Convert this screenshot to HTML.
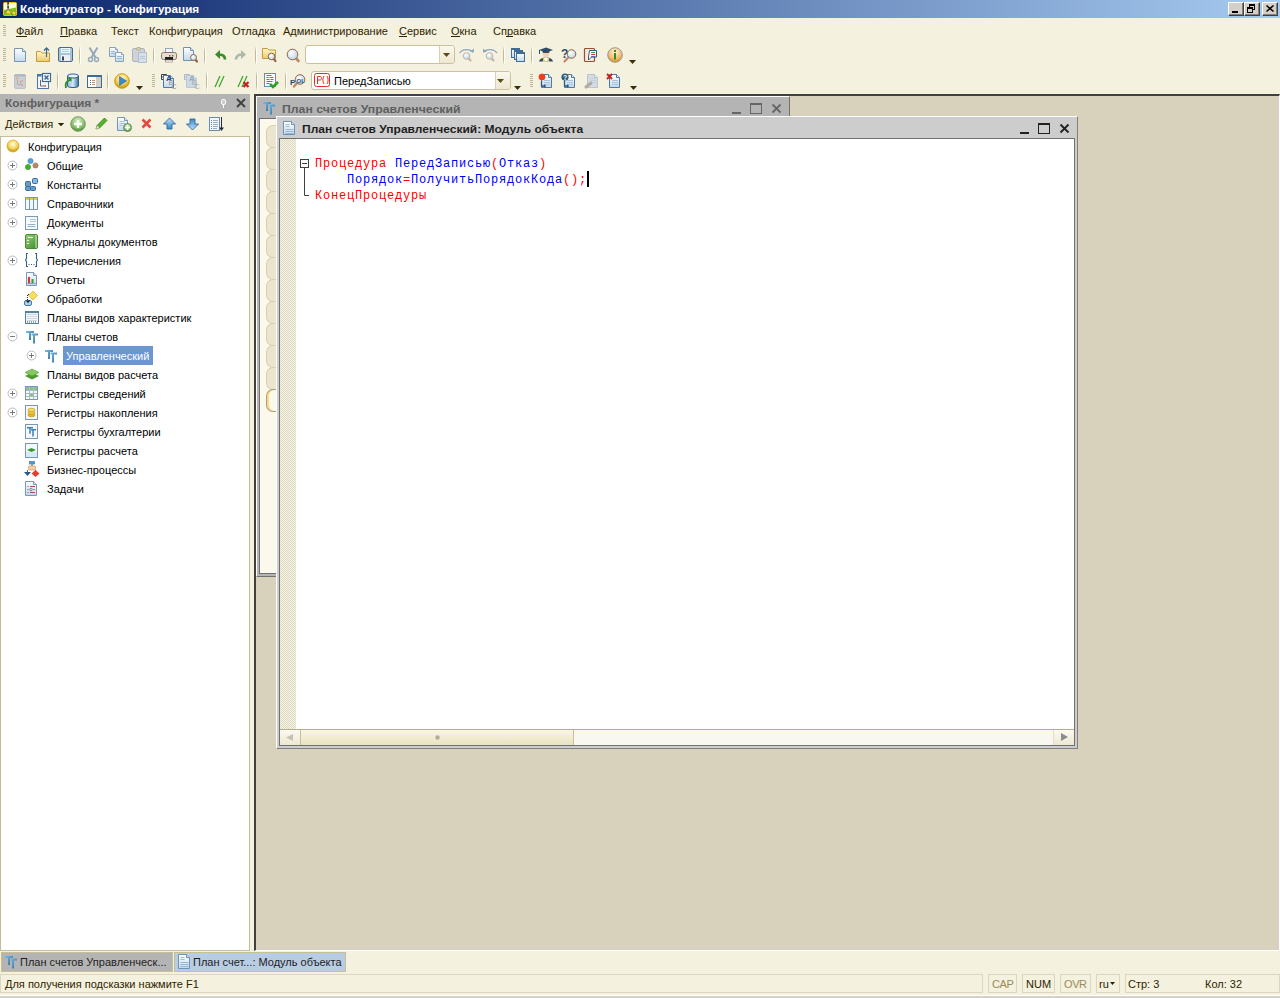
<!DOCTYPE html>
<html><head><meta charset="utf-8"><title>Конфигуратор - Конфигурация</title><style>
*{margin:0;padding:0;box-sizing:border-box}
html,body{width:1280px;height:998px;overflow:hidden}
body{position:relative;background:#F4F1DE;font:11px "Liberation Sans",sans-serif;color:#2E2400}
.a{position:absolute}
.t{position:absolute;white-space:pre}
</style></head><body>
<div class="a" style="left:0px;top:0px;width:1280px;height:18px;background:linear-gradient(to right,#0A246A,#A6CAF0);"></div>
<div class="t" style="left:20px;top:3px;color:#FFFFFF;font-size:11px;font-weight:bold;font-family:'Liberation Sans';line-height:13px;transform:scaleX(1.066);transform-origin:0 0;">Конфигуратор - Конфигурация</div>
<div class="a" style="left:1228px;top:2px;width:16px;height:14px;background:#D4D0C8;border-top:1px solid #fff;border-left:1px solid #fff;border-right:1px solid #404040;border-bottom:1px solid #404040;box-shadow:inset -1px -1px 0 #808080"></div>
<div class="a" style="left:1244px;top:2px;width:16px;height:14px;background:#D4D0C8;border-top:1px solid #fff;border-left:1px solid #fff;border-right:1px solid #404040;border-bottom:1px solid #404040;box-shadow:inset -1px -1px 0 #808080"></div>
<div class="a" style="left:1262px;top:2px;width:16px;height:14px;background:#D4D0C8;border-top:1px solid #fff;border-left:1px solid #fff;border-right:1px solid #404040;border-bottom:1px solid #404040;box-shadow:inset -1px -1px 0 #808080"></div>
<div class="a" style="left:1232px;top:11px;width:6px;height:2px;background:#000;"></div>
<svg class="a" style="left:1244px;top:2px;" width="16" height="14" viewBox="0 0 16 14"><g fill="#000" shape-rendering="crispEdges"><rect x="5" y="2" width="6" height="2"/><rect x="10" y="2" width="1" height="6"/><rect x="9" y="7" width="2" height="1"/><rect x="5" y="2" width="1" height="3"/><rect x="3" y="5" width="6" height="2"/><rect x="3" y="5" width="1" height="6"/><rect x="8" y="5" width="1" height="6"/><rect x="3" y="10" width="6" height="1"/></g></svg>
<svg class="a" style="left:1262px;top:2px;" width="16" height="14" viewBox="0 0 16 14"><path d="M4.5 3.5l7 6M11.5 3.5l-7 6" stroke="#000" stroke-width="1.6" fill="none"/></svg>
<div class="a" style="left:254px;top:94px;width:1026px;height:857px;background:#D8D2BC;border-top:2px solid #404040;border-left:2px solid #404040;border-right:1px solid #fff;border-bottom:1px solid #fff;box-shadow:inset -1px -1px 0 #D4D0C8"></div>
<div class="a" style="left:3px;top:25px;width:3px;height:1px;background:#BEB592;"></div>
<div class="a" style="left:3px;top:27px;width:3px;height:1px;background:#BEB592;"></div>
<div class="a" style="left:3px;top:29px;width:3px;height:1px;background:#BEB592;"></div>
<div class="a" style="left:3px;top:31px;width:3px;height:1px;background:#BEB592;"></div>
<div class="a" style="left:3px;top:33px;width:3px;height:1px;background:#BEB592;"></div>
<div class="a" style="left:3px;top:35px;width:3px;height:1px;background:#BEB592;"></div>
<div class="a" style="left:3px;top:48px;width:3px;height:1px;background:#BEB592;"></div>
<div class="a" style="left:3px;top:50px;width:3px;height:1px;background:#BEB592;"></div>
<div class="a" style="left:3px;top:52px;width:3px;height:1px;background:#BEB592;"></div>
<div class="a" style="left:3px;top:54px;width:3px;height:1px;background:#BEB592;"></div>
<div class="a" style="left:3px;top:56px;width:3px;height:1px;background:#BEB592;"></div>
<div class="a" style="left:3px;top:58px;width:3px;height:1px;background:#BEB592;"></div>
<div class="a" style="left:3px;top:60px;width:3px;height:1px;background:#BEB592;"></div>
<div class="a" style="left:3px;top:74px;width:3px;height:1px;background:#BEB592;"></div>
<div class="a" style="left:3px;top:76px;width:3px;height:1px;background:#BEB592;"></div>
<div class="a" style="left:3px;top:78px;width:3px;height:1px;background:#BEB592;"></div>
<div class="a" style="left:3px;top:80px;width:3px;height:1px;background:#BEB592;"></div>
<div class="a" style="left:3px;top:82px;width:3px;height:1px;background:#BEB592;"></div>
<div class="a" style="left:3px;top:84px;width:3px;height:1px;background:#BEB592;"></div>
<div class="a" style="left:3px;top:86px;width:3px;height:1px;background:#BEB592;"></div>
<div class="a" style="left:152px;top:74px;width:3px;height:1px;background:#BEB592;"></div>
<div class="a" style="left:152px;top:76px;width:3px;height:1px;background:#BEB592;"></div>
<div class="a" style="left:152px;top:78px;width:3px;height:1px;background:#BEB592;"></div>
<div class="a" style="left:152px;top:80px;width:3px;height:1px;background:#BEB592;"></div>
<div class="a" style="left:152px;top:82px;width:3px;height:1px;background:#BEB592;"></div>
<div class="a" style="left:152px;top:84px;width:3px;height:1px;background:#BEB592;"></div>
<div class="a" style="left:152px;top:86px;width:3px;height:1px;background:#BEB592;"></div>
<div class="a" style="left:530px;top:74px;width:3px;height:1px;background:#BEB592;"></div>
<div class="a" style="left:530px;top:76px;width:3px;height:1px;background:#BEB592;"></div>
<div class="a" style="left:530px;top:78px;width:3px;height:1px;background:#BEB592;"></div>
<div class="a" style="left:530px;top:80px;width:3px;height:1px;background:#BEB592;"></div>
<div class="a" style="left:530px;top:82px;width:3px;height:1px;background:#BEB592;"></div>
<div class="a" style="left:530px;top:84px;width:3px;height:1px;background:#BEB592;"></div>
<div class="a" style="left:530px;top:86px;width:3px;height:1px;background:#BEB592;"></div>
<div class="a" style="left:79px;top:47px;width:1px;height:17px;background:linear-gradient(rgba(190,178,130,0.2),#C4BA90 25%,#C4BA90 75%,rgba(190,178,130,0.2));box-shadow:1px 0 0 #FFFFFF"></div>
<div class="a" style="left:153px;top:47px;width:1px;height:17px;background:linear-gradient(rgba(190,178,130,0.2),#C4BA90 25%,#C4BA90 75%,rgba(190,178,130,0.2));box-shadow:1px 0 0 #FFFFFF"></div>
<div class="a" style="left:204px;top:47px;width:1px;height:17px;background:linear-gradient(rgba(190,178,130,0.2),#C4BA90 25%,#C4BA90 75%,rgba(190,178,130,0.2));box-shadow:1px 0 0 #FFFFFF"></div>
<div class="a" style="left:255px;top:47px;width:1px;height:17px;background:linear-gradient(rgba(190,178,130,0.2),#C4BA90 25%,#C4BA90 75%,rgba(190,178,130,0.2));box-shadow:1px 0 0 #FFFFFF"></div>
<div class="a" style="left:503px;top:47px;width:1px;height:17px;background:linear-gradient(rgba(190,178,130,0.2),#C4BA90 25%,#C4BA90 75%,rgba(190,178,130,0.2));box-shadow:1px 0 0 #FFFFFF"></div>
<div class="a" style="left:531px;top:47px;width:1px;height:17px;background:linear-gradient(rgba(190,178,130,0.2),#C4BA90 25%,#C4BA90 75%,rgba(190,178,130,0.2));box-shadow:1px 0 0 #FFFFFF"></div>
<div class="a" style="left:57px;top:72px;width:1px;height:18px;background:linear-gradient(rgba(190,178,130,0.2),#C4BA90 25%,#C4BA90 75%,rgba(190,178,130,0.2));box-shadow:1px 0 0 #FFFFFF"></div>
<div class="a" style="left:107px;top:72px;width:1px;height:18px;background:linear-gradient(rgba(190,178,130,0.2),#C4BA90 25%,#C4BA90 75%,rgba(190,178,130,0.2));box-shadow:1px 0 0 #FFFFFF"></div>
<div class="a" style="left:206px;top:72px;width:1px;height:18px;background:linear-gradient(rgba(190,178,130,0.2),#C4BA90 25%,#C4BA90 75%,rgba(190,178,130,0.2));box-shadow:1px 0 0 #FFFFFF"></div>
<div class="a" style="left:256px;top:72px;width:1px;height:18px;background:linear-gradient(rgba(190,178,130,0.2),#C4BA90 25%,#C4BA90 75%,rgba(190,178,130,0.2));box-shadow:1px 0 0 #FFFFFF"></div>
<div class="a" style="left:285px;top:72px;width:1px;height:18px;background:linear-gradient(rgba(190,178,130,0.2),#C4BA90 25%,#C4BA90 75%,rgba(190,178,130,0.2));box-shadow:1px 0 0 #FFFFFF"></div>
<div class="t" style="left:16px;top:25px;color:#2E2400;font-size:11px;font-family:'Liberation Sans';line-height:13px;">Файл</div>
<div class="t" style="left:60px;top:25px;color:#2E2400;font-size:11px;font-family:'Liberation Sans';line-height:13px;">Правка</div>
<div class="t" style="left:111px;top:25px;color:#2E2400;font-size:11px;font-family:'Liberation Sans';line-height:13px;">Текст</div>
<div class="t" style="left:149px;top:25px;color:#2E2400;font-size:11px;font-family:'Liberation Sans';line-height:13px;">Конфигурация</div>
<div class="t" style="left:232px;top:25px;color:#2E2400;font-size:11px;font-family:'Liberation Sans';line-height:13px;">Отладка</div>
<div class="t" style="left:283px;top:25px;color:#2E2400;font-size:11px;font-family:'Liberation Sans';line-height:13px;">Администрирование</div>
<div class="t" style="left:399px;top:25px;color:#2E2400;font-size:11px;font-family:'Liberation Sans';line-height:13px;">Сервис</div>
<div class="t" style="left:451px;top:25px;color:#2E2400;font-size:11px;font-family:'Liberation Sans';line-height:13px;">Окна</div>
<div class="t" style="left:493px;top:25px;color:#2E2400;font-size:11px;font-family:'Liberation Sans';line-height:13px;">Справка</div>
<div class="a" style="left:16px;top:36px;width:11px;height:1px;background:#2E2400;"></div>
<div class="a" style="left:60px;top:36px;width:8px;height:1px;background:#2E2400;"></div>
<div class="a" style="left:399px;top:36px;width:8px;height:1px;background:#2E2400;"></div>
<div class="a" style="left:451px;top:36px;width:9px;height:1px;background:#2E2400;"></div>
<div class="a" style="left:506px;top:36px;width:7px;height:1px;background:#2E2400;"></div>
<div class="a" style="left:305px;top:45px;width:150px;height:19px;background:#FFFFFF;border:1px solid #CBC29C;border-radius:3px"></div>
<div class="a" style="left:439px;top:46px;width:15px;height:17px;background:linear-gradient(#FAF8EE,#EEE8D0);border-left:1px solid #D8D0AE;border-radius:0 2px 2px 0"></div>
<div class="a" style="left:311px;top:71px;width:200px;height:19px;background:#FFFFFF;border:1px solid #CBC29C;border-radius:3px"></div>
<div class="a" style="left:495px;top:72px;width:15px;height:17px;background:linear-gradient(#FAF8EE,#EEE8D0);border-left:1px solid #D8D0AE;border-radius:0 2px 2px 0"></div>
<div class="t" style="left:334px;top:75px;color:#000000;font-size:11px;font-family:'Liberation Sans';line-height:13px;">ПередЗаписью</div>
<div class="a" style="left:0px;top:94px;width:250px;height:18px;background:#B4B4B4;"></div>
<div class="t" style="left:5px;top:97px;color:#5F5F5F;font-size:11px;font-weight:bold;font-family:'Liberation Sans';line-height:13px;transform:scaleX(1.08);transform-origin:0 0;">Конфигурация *</div>
<svg class="a" style="left:236px;top:98px;" width="10" height="10" viewBox="0 0 10 10"><path d="M1 1L9 9M9 1L1 9" stroke="#404040" stroke-width="1.8" fill="none"/></svg>
<svg class="a" style="left:220px;top:98px;" width="7" height="10" viewBox="0 0 7 10"><rect x="1.5" y="1.5" width="4" height="5" rx="1.5" fill="#C8C8C8" stroke="#FFFFFF"/><path d="M3.5 7v3" stroke="#FFFFFF"/></svg>
<div class="t" style="left:5px;top:118px;color:#2E2400;font-size:11px;font-family:'Liberation Sans';line-height:13px;">Действия</div>
<svg class="a" style="left:58px;top:123px;" width="6" height="4" viewBox="0 0 6 4"><path d="M0 0h6L3 3z" fill="#2E2400"/></svg>
<div class="a" style="left:0px;top:136px;width:250px;height:815px;background:#FFFFFF;border:1px solid #C6BC97"></div>
<div class="t" style="left:28px;top:141px;color:#000000;font-size:11px;font-family:'Liberation Sans';line-height:13px;">Конфигурация</div>
<div class="t" style="left:47px;top:160px;color:#000000;font-size:11px;font-family:'Liberation Sans';line-height:13px;">Общие</div>
<svg class="a" style="left:7px;top:160px;" width="11" height="11" viewBox="0 0 11 11"><circle cx="5.5" cy="5.5" r="4.5" fill="#fff" stroke="#BBBBBB" stroke-width="1"/><path d="M3 5.5h5" stroke="#7A7A7A" stroke-width="1"/><path d="M5.5 3v5" stroke="#7A7A7A" stroke-width="1"/></svg>
<div class="t" style="left:47px;top:179px;color:#000000;font-size:11px;font-family:'Liberation Sans';line-height:13px;">Константы</div>
<svg class="a" style="left:7px;top:179px;" width="11" height="11" viewBox="0 0 11 11"><circle cx="5.5" cy="5.5" r="4.5" fill="#fff" stroke="#BBBBBB" stroke-width="1"/><path d="M3 5.5h5" stroke="#7A7A7A" stroke-width="1"/><path d="M5.5 3v5" stroke="#7A7A7A" stroke-width="1"/></svg>
<div class="t" style="left:47px;top:198px;color:#000000;font-size:11px;font-family:'Liberation Sans';line-height:13px;">Справочники</div>
<svg class="a" style="left:7px;top:198px;" width="11" height="11" viewBox="0 0 11 11"><circle cx="5.5" cy="5.5" r="4.5" fill="#fff" stroke="#BBBBBB" stroke-width="1"/><path d="M3 5.5h5" stroke="#7A7A7A" stroke-width="1"/><path d="M5.5 3v5" stroke="#7A7A7A" stroke-width="1"/></svg>
<div class="t" style="left:47px;top:217px;color:#000000;font-size:11px;font-family:'Liberation Sans';line-height:13px;">Документы</div>
<svg class="a" style="left:7px;top:217px;" width="11" height="11" viewBox="0 0 11 11"><circle cx="5.5" cy="5.5" r="4.5" fill="#fff" stroke="#BBBBBB" stroke-width="1"/><path d="M3 5.5h5" stroke="#7A7A7A" stroke-width="1"/><path d="M5.5 3v5" stroke="#7A7A7A" stroke-width="1"/></svg>
<div class="t" style="left:47px;top:236px;color:#000000;font-size:11px;font-family:'Liberation Sans';line-height:13px;">Журналы документов</div>
<div class="t" style="left:47px;top:255px;color:#000000;font-size:11px;font-family:'Liberation Sans';line-height:13px;">Перечисления</div>
<svg class="a" style="left:7px;top:255px;" width="11" height="11" viewBox="0 0 11 11"><circle cx="5.5" cy="5.5" r="4.5" fill="#fff" stroke="#BBBBBB" stroke-width="1"/><path d="M3 5.5h5" stroke="#7A7A7A" stroke-width="1"/><path d="M5.5 3v5" stroke="#7A7A7A" stroke-width="1"/></svg>
<div class="t" style="left:47px;top:274px;color:#000000;font-size:11px;font-family:'Liberation Sans';line-height:13px;">Отчеты</div>
<div class="t" style="left:47px;top:293px;color:#000000;font-size:11px;font-family:'Liberation Sans';line-height:13px;">Обработки</div>
<div class="t" style="left:47px;top:312px;color:#000000;font-size:11px;font-family:'Liberation Sans';line-height:13px;">Планы видов характеристик</div>
<div class="t" style="left:47px;top:331px;color:#000000;font-size:11px;font-family:'Liberation Sans';line-height:13px;">Планы счетов</div>
<svg class="a" style="left:7px;top:331px;" width="11" height="11" viewBox="0 0 11 11"><circle cx="5.5" cy="5.5" r="4.5" fill="#fff" stroke="#BBBBBB" stroke-width="1"/><path d="M3 5.5h5" stroke="#7A7A7A" stroke-width="1"/></svg>
<div class="a" style="left:63px;top:346px;width:90px;height:19px;background:#6B96D0;"></div>
<div class="t" style="left:66px;top:350px;color:#FFFFFF;font-size:11px;font-family:'Liberation Sans';line-height:13px;">Управленческий</div>
<svg class="a" style="left:26px;top:350px;" width="11" height="11" viewBox="0 0 11 11"><circle cx="5.5" cy="5.5" r="4.5" fill="#fff" stroke="#BBBBBB" stroke-width="1"/><path d="M3 5.5h5" stroke="#7A7A7A" stroke-width="1"/><path d="M5.5 3v5" stroke="#7A7A7A" stroke-width="1"/></svg>
<div class="t" style="left:47px;top:369px;color:#000000;font-size:11px;font-family:'Liberation Sans';line-height:13px;">Планы видов расчета</div>
<div class="t" style="left:47px;top:388px;color:#000000;font-size:11px;font-family:'Liberation Sans';line-height:13px;">Регистры сведений</div>
<svg class="a" style="left:7px;top:388px;" width="11" height="11" viewBox="0 0 11 11"><circle cx="5.5" cy="5.5" r="4.5" fill="#fff" stroke="#BBBBBB" stroke-width="1"/><path d="M3 5.5h5" stroke="#7A7A7A" stroke-width="1"/><path d="M5.5 3v5" stroke="#7A7A7A" stroke-width="1"/></svg>
<div class="t" style="left:47px;top:407px;color:#000000;font-size:11px;font-family:'Liberation Sans';line-height:13px;">Регистры накопления</div>
<svg class="a" style="left:7px;top:407px;" width="11" height="11" viewBox="0 0 11 11"><circle cx="5.5" cy="5.5" r="4.5" fill="#fff" stroke="#BBBBBB" stroke-width="1"/><path d="M3 5.5h5" stroke="#7A7A7A" stroke-width="1"/><path d="M5.5 3v5" stroke="#7A7A7A" stroke-width="1"/></svg>
<div class="t" style="left:47px;top:426px;color:#000000;font-size:11px;font-family:'Liberation Sans';line-height:13px;">Регистры бухгалтерии</div>
<div class="t" style="left:47px;top:445px;color:#000000;font-size:11px;font-family:'Liberation Sans';line-height:13px;">Регистры расчета</div>
<div class="t" style="left:47px;top:464px;color:#000000;font-size:11px;font-family:'Liberation Sans';line-height:13px;">Бизнес-процессы</div>
<div class="t" style="left:47px;top:483px;color:#000000;font-size:11px;font-family:'Liberation Sans';line-height:13px;">Задачи</div>
<div class="a" style="left:256px;top:96px;width:534px;height:481px;background:#B4B4B4;border-top:1px solid #fff;border-left:1px solid #fff;border-right:1px solid #707070;border-bottom:1px solid #707070"></div>
<div class="t" style="left:282px;top:103px;color:#5F5F5F;font-size:11px;font-weight:bold;font-family:'Liberation Sans';line-height:13px;transform:scaleX(1.113);transform-origin:0 0;">План счетов Управленческий</div>
<div class="a" style="left:732px;top:112px;width:9px;height:2px;background:#666666;"></div>
<svg class="a" style="left:750px;top:103px;" width="12" height="11" viewBox="0 0 12 11"><rect x="0.5" y="0.5" width="11" height="10" fill="none" stroke="#666"/><rect x="0" y="0" width="12" height="2" fill="#666"/></svg>
<svg class="a" style="left:771px;top:103px;" width="11" height="11" viewBox="0 0 11 11"><path d="M1.5 1.5l8 8M9.5 1.5l-8 8" stroke="#666" stroke-width="1.8" fill="none"/></svg>
<div class="a" style="left:259px;top:118px;width:529px;height:456px;background:#FBF9EB;border-top:1px solid #707070;border-left:1px solid #707070;border-bottom:1px solid #707070"></div>
<div class="a" style="left:266px;top:125px;width:16px;height:23px;background:#EBE5CD;border:1px solid #D8D0B0;border-right:none;border-radius:7px 0 0 7px"></div>
<div class="a" style="left:266px;top:147px;width:16px;height:23px;background:#EBE5CD;border:1px solid #D8D0B0;border-right:none;border-radius:7px 0 0 7px"></div>
<div class="a" style="left:266px;top:169px;width:16px;height:23px;background:#EBE5CD;border:1px solid #D8D0B0;border-right:none;border-radius:7px 0 0 7px"></div>
<div class="a" style="left:266px;top:191px;width:16px;height:23px;background:#EBE5CD;border:1px solid #D8D0B0;border-right:none;border-radius:7px 0 0 7px"></div>
<div class="a" style="left:266px;top:213px;width:16px;height:23px;background:#EBE5CD;border:1px solid #D8D0B0;border-right:none;border-radius:7px 0 0 7px"></div>
<div class="a" style="left:266px;top:235px;width:16px;height:23px;background:#EBE5CD;border:1px solid #D8D0B0;border-right:none;border-radius:7px 0 0 7px"></div>
<div class="a" style="left:266px;top:257px;width:16px;height:23px;background:#EBE5CD;border:1px solid #D8D0B0;border-right:none;border-radius:7px 0 0 7px"></div>
<div class="a" style="left:266px;top:279px;width:16px;height:23px;background:#EBE5CD;border:1px solid #D8D0B0;border-right:none;border-radius:7px 0 0 7px"></div>
<div class="a" style="left:266px;top:301px;width:16px;height:23px;background:#EBE5CD;border:1px solid #D8D0B0;border-right:none;border-radius:7px 0 0 7px"></div>
<div class="a" style="left:266px;top:323px;width:16px;height:23px;background:#EBE5CD;border:1px solid #D8D0B0;border-right:none;border-radius:7px 0 0 7px"></div>
<div class="a" style="left:266px;top:345px;width:16px;height:23px;background:#EBE5CD;border:1px solid #D8D0B0;border-right:none;border-radius:7px 0 0 7px"></div>
<div class="a" style="left:266px;top:367px;width:16px;height:23px;background:#EBE5CD;border:1px solid #D8D0B0;border-right:none;border-radius:7px 0 0 7px"></div>
<div class="a" style="left:266px;top:389px;width:16px;height:23px;background:#FBF9EB;border:1px solid #A89F72;border-right:none;border-radius:7px 0 0 7px;box-shadow:inset 2px 0 0 #FFD890"></div>
<div class="a" style="left:276px;top:116px;width:802px;height:633px;background:#CDCDCD;border-top:1px solid #fff;border-left:1px solid #fff;border-right:1px solid #808080;border-bottom:1px solid #808080"></div>
<div class="t" style="left:302px;top:123px;color:#1E1E1E;font-size:11px;font-weight:bold;font-family:'Liberation Sans';line-height:13px;transform:scaleX(1.093);transform-origin:0 0;">План счетов Управленческий: Модуль объекта</div>
<div class="a" style="left:1020px;top:132px;width:9px;height:2px;background:#222222;"></div>
<svg class="a" style="left:1038px;top:123px;" width="12" height="11" viewBox="0 0 12 11"><rect x="0.5" y="0.5" width="11" height="10" fill="none" stroke="#222"/><rect x="0" y="0" width="12" height="2" fill="#222"/></svg>
<svg class="a" style="left:1059px;top:123px;" width="11" height="11" viewBox="0 0 11 11"><path d="M1.5 1.5l8 8M9.5 1.5l-8 8" stroke="#222" stroke-width="1.8" fill="none"/></svg>
<div class="a" style="left:279px;top:138px;width:796px;height:608px;background:#FFFFFF;border:1px solid #707070"></div>
<div class="a" style="left:280px;top:139px;width:16px;height:590px;background-color:#F6F4E2;background-image:linear-gradient(45deg,#DCD8C4 25%,transparent 25%,transparent 75%,#DCD8C4 75%),linear-gradient(45deg,#DCD8C4 25%,transparent 25%,transparent 75%,#DCD8C4 75%);background-size:2px 2px;background-position:0 0,1px 1px"></div>
<div class="t" style="left:315px;top:156px;font-family:'Liberation Mono';font-size:12px;letter-spacing:0.8px;line-height:16px"><span style="color:#FF0000">Процедура </span><span style="color:#0000FF">ПередЗаписью</span><span style="color:#FF0000">(</span><span style="color:#0000FF">Отказ</span><span style="color:#FF0000">)</span></div>
<div class="t" style="left:347px;top:172px;font-family:'Liberation Mono';font-size:12px;letter-spacing:0.8px;line-height:16px"><span style="color:#0000FF">Порядок</span><span style="color:#FF0000">=</span><span style="color:#0000FF">ПолучитьПорядокКода</span><span style="color:#FF0000">();</span></div>
<div class="t" style="left:315px;top:188px;font-family:'Liberation Mono';font-size:12px;letter-spacing:0.8px;line-height:16px"><span style="color:#FF0000">КонецПроцедуры</span></div>
<div class="a" style="left:587px;top:171px;width:2px;height:16px;background:#000;"></div>
<svg class="a" style="left:300px;top:159px;" width="10" height="38" viewBox="0 0 10 38"><rect x="0.5" y="0.5" width="8" height="8" fill="#fff" stroke="#404040"/><path d="M2 4.5h5" stroke="#404040"/><path d="M4.5 9v27.5H9" fill="none" stroke="#404040"/></svg>
<div class="a" style="left:280px;top:729px;width:794px;height:16px;background:#F8F7F0;border-top:1px solid #B8AE88"></div>
<div class="a" style="left:280px;top:730px;width:20px;height:15px;background:linear-gradient(#FCFAF0,#EDE8D2);"></div>
<div class="a" style="left:300px;top:730px;width:1px;height:15px;background:#C8BE98;"></div>
<svg class="a" style="left:286px;top:734px;" width="8" height="8" viewBox="0 0 8 8"><path d="M0 3.5L7 0v7z" fill="#C4C2B4"/></svg>
<div class="a" style="left:301px;top:730px;width:272px;height:15px;background:linear-gradient(#F8F5E6,#F0EBCD 60%,#E8E2C4);"></div>
<div class="a" style="left:573px;top:730px;width:1px;height:15px;background:#C8BE98;"></div>
<svg class="a" style="left:435px;top:735px;" width="5" height="5" viewBox="0 0 5 5"><circle cx="2.5" cy="2.5" r="2.2" fill="#B0AC9C"/></svg>
<div class="a" style="left:1053px;top:730px;width:1px;height:15px;background:#E4DECA;"></div>
<div class="a" style="left:1054px;top:730px;width:20px;height:15px;background:linear-gradient(#FCFAF0,#EDE8D2);"></div>
<svg class="a" style="left:1061px;top:733px;" width="8" height="9" viewBox="0 0 8 9"><path d="M0 0L7 4L0 8z" fill="#8C8C8C"/></svg>
<div class="a" style="left:1px;top:952px;width:172px;height:20px;background:#B4B4B4;border:1px solid #C8BE96"></div>
<div class="t" style="left:20px;top:956px;color:#222222;font-size:11px;font-family:'Liberation Sans';line-height:13px;">План счетов Управленческ...</div>
<div class="a" style="left:174px;top:952px;width:172px;height:20px;background:#B8CCE4;border:1px solid #C8BE96"></div>
<div class="t" style="left:193px;top:956px;color:#222222;font-size:11px;font-family:'Liberation Sans';line-height:13px;">План счет...: Модуль объекта</div>
<div class="a" style="left:0px;top:974px;width:983px;height:19px;border:1px solid #DCD6BE"></div>
<div class="a" style="left:988px;top:974px;width:29px;height:19px;border:1px solid #DCD6BE"></div>
<div class="a" style="left:1022px;top:974px;width:33px;height:19px;border:1px solid #DCD6BE"></div>
<div class="a" style="left:1060px;top:974px;width:31px;height:19px;border:1px solid #DCD6BE"></div>
<div class="a" style="left:1096px;top:974px;width:24px;height:19px;border:1px solid #DCD6BE"></div>
<div class="a" style="left:1125px;top:974px;width:155px;height:19px;border:1px solid #DCD6BE"></div>
<div class="t" style="left:5px;top:978px;color:#2E2400;font-size:11px;font-family:'Liberation Sans';line-height:13px;">Для получения подсказки нажмите F1</div>
<div class="t" style="left:992px;top:978px;color:#9A8A58;font-size:11px;font-family:'Liberation Sans';line-height:13px;letter-spacing:-0.4px;">CAP</div>
<div class="t" style="left:1026px;top:978px;color:#2E2400;font-size:11px;font-family:'Liberation Sans';line-height:13px;">NUM</div>
<div class="t" style="left:1064px;top:978px;color:#9A8A58;font-size:11px;font-family:'Liberation Sans';line-height:13px;letter-spacing:-0.4px;">OVR</div>
<div class="t" style="left:1099px;top:978px;color:#2E2400;font-size:11px;font-family:'Liberation Sans';line-height:13px;">ru</div>
<svg class="a" style="left:1110px;top:982px;" width="6" height="4" viewBox="0 0 6 4"><path d="M0 0h5L2.5 3z" fill="#2E2400"/></svg>
<div class="t" style="left:1128px;top:978px;color:#2E2400;font-size:11px;font-family:'Liberation Sans';line-height:13px;">Стр: 3</div>
<div class="t" style="left:1205px;top:978px;color:#2E2400;font-size:11px;font-family:'Liberation Sans';line-height:13px;">Кол: 32</div>
<div class="a" style="left:0px;top:995px;width:1280px;height:1px;background:#FFFFFF;"></div>
<div class="a" style="left:0px;top:996px;width:1280px;height:2px;background:#D4D0C8;"></div>
<svg class="a" style="left:0;top:0" width="1280" height="998"><defs>
<linearGradient id="gDoc" x1="0" y1="0" x2="0" y2="1"><stop offset="0" stop-color="#FFFFFF"/><stop offset="1" stop-color="#C2D8EC"/></linearGradient>
<linearGradient id="gFold" x1="0" y1="0" x2="0" y2="1"><stop offset="0" stop-color="#FFF8D0"/><stop offset="1" stop-color="#EACB6A"/></linearGradient>
<linearGradient id="gBlue" x1="0" y1="0" x2="1" y2="0"><stop offset="0" stop-color="#8EBADC"/><stop offset="0.5" stop-color="#D6EAF8"/><stop offset="1" stop-color="#3A6E9C"/></linearGradient>
<radialGradient id="gYel" cx="0.5" cy="0.35" r="0.6"><stop offset="0" stop-color="#FFFDE8"/><stop offset="0.6" stop-color="#F6D660"/><stop offset="1" stop-color="#C89A10"/></radialGradient>
<radialGradient id="gOrg" cx="0.5" cy="0.3" r="0.7"><stop offset="0" stop-color="#FFF6E0"/><stop offset="0.7" stop-color="#F2B860"/><stop offset="1" stop-color="#D08A20"/></radialGradient>
<radialGradient id="gGrn" cx="0.5" cy="0.3" r="0.7"><stop offset="0" stop-color="#D8F0C8"/><stop offset="0.7" stop-color="#80BC60"/><stop offset="1" stop-color="#4A8A30"/></radialGradient>
<radialGradient id="gMag" cx="0.4" cy="0.35" r="0.7"><stop offset="0" stop-color="#FFFFFF"/><stop offset="1" stop-color="#B8D0E8"/></radialGradient>
<linearGradient id="gArrUp" x1="0" y1="0" x2="0" y2="1"><stop offset="0" stop-color="#BFE2FA"/><stop offset="1" stop-color="#3C88C8"/></linearGradient>
<linearGradient id="gArrDn" x1="0" y1="0" x2="0" y2="1"><stop offset="0" stop-color="#3C88C8"/><stop offset="1" stop-color="#BFE2FA"/></linearGradient>
<linearGradient id="gGrnBook" x1="0" y1="0" x2="1" y2="1"><stop offset="0" stop-color="#9CD080"/><stop offset="1" stop-color="#3C8A28"/></linearGradient>
<linearGradient id="gTT" x1="0" y1="0" x2="1" y2="1"><stop offset="0" stop-color="#78BCE6"/><stop offset="1" stop-color="#2C6C9E"/></linearGradient>
<pattern id="hatch" width="2" height="2" patternUnits="userSpaceOnUse"><rect width="2" height="2" fill="#F6F3E4"/><rect width="1" height="1" fill="#E0DCC4"/><rect x="1" y="1" width="1" height="1" fill="#E0DCC4"/></pattern>
</defs><g transform="translate(12,47)"><path d="M2.5 1.5h8l3 3v10h-11z" fill="url(#gDoc)" stroke="#7896B2"/><path d="M10.5 1.5v3h3" fill="#DCE8F4" stroke="#7896B2"/></g><g transform="translate(35,47)"><path d="M1.5 4.5h4l1.5 1.5h7.5v8.5h-13z" fill="url(#gFold)" stroke="#C49A3C"/><path d="M11.5 10V1.5" stroke="#3A6A8C" stroke-width="1.2"/><path d="M9 3.5l2.5-2.5 2.5 2.5" fill="none" stroke="#3A6A8C" stroke-width="1.3"/></g><g transform="translate(57,47)"><rect x="1.5" y="0.5" width="14" height="14" rx="1.5" fill="#A4C4E0" stroke="#4A6A88"/><rect x="4" y="1" width="9" height="5" fill="#F2F8FA"/><path d="M5 2.5h7M5 4.5h7" stroke="#A6CEDC"/><rect x="4" y="8" width="9" height="6" fill="#EEEEEE"/><rect x="5" y="9.5" width="2" height="4" fill="#3C4650"/></g><g transform="translate(86,47)"><path d="M3.5 0.5L9.5 10.5M11.5 0.5L5.5 10.5" stroke="#94A8BC" stroke-width="2"/><circle cx="4.5" cy="12.5" r="2" fill="none" stroke="#94A8BC" stroke-width="1.4"/><circle cx="10.5" cy="12.5" r="2" fill="none" stroke="#94A8BC" stroke-width="1.4"/></g><g transform="translate(109,47)"><path d="M0.5 0.5h6l2 2v7h-8z" fill="url(#gDoc)" stroke="#8AA2B8"/><path d="M6.5 0.5v2h2" fill="#DCE8F4" stroke="#8AA2B8"/><path d="M2 4.5h4M2 6.5h4" stroke="#9AB6CC"/><path d="M6.5 5.5h6l2 2v7h-8z" fill="url(#gDoc)" stroke="#8AA2B8"/><path d="M12.5 5.5v2h2" fill="#DCE8F4" stroke="#8AA2B8"/><path d="M8 9.5h5M8 11.5h5" stroke="#9AB6CC"/></g><g transform="translate(132,47)"><rect x="0.5" y="1.5" width="12" height="13" rx="1.5" fill="#CFD3D6" stroke="#A8B4BE"/><rect x="4.5" y="0.5" width="4" height="2.5" rx="1" fill="#D8D2B4" stroke="#B8AE86"/><rect x="6.5" y="5.5" width="8" height="10" fill="#D6E0E8" stroke="#B0C0CC"/><path d="M8 9.5h5M8 11.5h5" stroke="#B4C8D8"/></g><g transform="translate(161,47)"><rect x="4.5" y="1.5" width="7" height="5" fill="#F4F8FC" stroke="#98A8B8"/><rect x="0.5" y="5.5" width="15" height="7" rx="2" fill="#E6DED6" stroke="#8A7464"/><rect x="8" y="8" width="1.5" height="1.5" fill="#E02020"/><rect x="11" y="8" width="1.5" height="1.5" fill="#20A020"/><rect x="4" y="10" width="8" height="3" fill="#202020"/><rect x="4.5" y="13" width="7" height="2" fill="#fff" stroke="#8A7464" stroke-width="0.6"/></g><g transform="translate(183,47)"><path d="M0.5 0.5h7l3 3v10h-10z" fill="url(#gDoc)" stroke="#6E92B4"/><path d="M7.5 0.5v3h3" fill="#DCE8F4" stroke="#6E92B4"/><path d="M10.5 10.5L14 14.5" stroke="#8E6448" stroke-width="2.2" stroke-linecap="round"/><circle cx="10.5" cy="10.5" r="3" fill="url(#gMag)" stroke="#8E6448" stroke-width="1"/></g><g transform="translate(212,47)"><path d="M3 7.5L8 3v9z" fill="#3A8C2A"/><path d="M7 7.5c3.5 0 6 1.5 6 5" fill="none" stroke="#3A8C2A" stroke-width="2.6"/></g><g transform="translate(233,47)"><path d="M13 7.5L8 3v9z" fill="#A8BCA8"/><path d="M9 7.5c-3.5 0-6 1.5-6 5" fill="none" stroke="#A8BCA8" stroke-width="2.6"/></g><g transform="translate(261,47)"><path d="M1.5 1.5h5l1.5 1.5h6.5v8.5h-13z" fill="url(#gFold)" stroke="#C49A3C"/><path d="M10.5 9.5L14.5 14" stroke="#8E6448" stroke-width="2.2" stroke-linecap="round"/><circle cx="10.5" cy="9.5" r="3.3" fill="url(#gMag)" stroke="#8E6448" stroke-width="1"/></g><g transform="translate(285,47)"><path d="M7.5 7.5L13.5 14" stroke="#C08A6A" stroke-width="2.6" stroke-linecap="round"/><circle cx="7.5" cy="7.5" r="5.3" fill="url(#gMag)" stroke="#8E6448" stroke-width="1"/></g><g transform="translate(459,47)"><path d="M0.5 6c3-4.5 11-4.5 13.5-0.5" fill="none" stroke="#8CA6BE" stroke-width="1.3"/><path d="M11 5h4v-3.5z" fill="#8CA6BE"/><path d="M7.5 9L11.5 13.5" stroke="#C4B4A4" stroke-width="2.2" stroke-linecap="round"/><circle cx="7.5" cy="9" r="3.3" fill="url(#gMag)" stroke="#C4B4A4" stroke-width="1"/></g><g transform="translate(482,47)"><path d="M15 6c-3-4.5-11-4.5-13.5-0.5" fill="none" stroke="#8CA6BE" stroke-width="1.3"/><path d="M5 5h-4v-3.5z" fill="#8CA6BE"/><path d="M7.5 9L11.5 13.5" stroke="#C4B4A4" stroke-width="2.2" stroke-linecap="round"/><circle cx="7.5" cy="9" r="3.3" fill="url(#gMag)" stroke="#C4B4A4" stroke-width="1"/></g><g transform="translate(510,47)"><rect x="1.5" y="1.5" width="8" height="9" fill="url(#gDoc)" stroke="#3E6C94"/><rect x="1.5" y="1.5" width="8" height="1.5" fill="#3E6C94"/><rect x="4.5" y="3.5" width="8" height="9" fill="url(#gDoc)" stroke="#3E6C94"/><rect x="4.5" y="3.5" width="8" height="1.5" fill="#3E6C94"/><rect x="6.5" y="5.5" width="8" height="9" fill="url(#gDoc)" stroke="#3E6C94"/><rect x="6.5" y="5.5" width="8" height="1.5" fill="#3E6C94"/></g><g transform="translate(538,47)"><path d="M1 14.5c1-3 3-4 7-4s6 1 7 4z" fill="#2C4C6C"/><path d="M4.5 14.5l2-4h3l2 4z" fill="#fff"/><path d="M5 11l1.5 3.5M11 11l-1.5 3.5" stroke="#F0C020" stroke-width="1.3"/><circle cx="8" cy="7" r="3.2" fill="#F2D2B2"/><path d="M5 6c0-2 6-2 6 0z" fill="#7A4A2A"/><path d="M1 3l7-2.5 7 2.5-7 2.5z" fill="#2C4C6C"/><rect x="4.5" y="3" width="7" height="2.5" fill="#2C4C6C"/><path d="M1.5 3v4" stroke="#2C4C6C"/></g><g transform="translate(561,47)"><text x="0" y="11" font-family="Liberation Sans" font-weight="bold" font-size="12" fill="#2A4E70">?</text><path d="M10.5 7L3.5 14.5" stroke="#C08A6A" stroke-width="2.2" stroke-linecap="round"/><circle cx="10.5" cy="7" r="4.3" fill="url(#gMag)" stroke="#8E6448" stroke-width="1"/></g><g transform="translate(583,47)"><rect x="1.5" y="1.5" width="10" height="13" rx="1" fill="#FCE8D8" stroke="#8C5434" stroke-width="1.2"/><path d="M6.5 3.5h7v6.5h-5l-3 3v-3z" fill="#fff" stroke="#2E5A86"/><path d="M8 5.5h4" stroke="#30A030"/><path d="M8 7.5h4" stroke="#E03030"/><path d="M8 9.5h4" stroke="#3060C0" stroke-width="0.8"/></g><g transform="translate(607,47)"><circle cx="8" cy="8" r="7.3" fill="url(#gOrg)" stroke="#9A9A9A"/><rect x="7" y="6" width="2" height="6.5" fill="#3A8A20"/><rect x="7" y="3" width="2" height="2" fill="#3A8A20"/></g><path d="M629 60h7l-3.5 4z" fill="#3A2E08"/><g transform="translate(12,73)"><rect x="2.5" y="1.5" width="11" height="14" rx="1.5" fill="#C8CED4" stroke="#BAC2CA"/><rect x="2.5" y="1.5" width="11" height="2" fill="#AEB6BE"/><path d="M5.5 5v6.5h5M8.5 8v4" stroke="#B8B0A8" fill="none"/><rect x="4" y="4" width="2" height="2" fill="#E0B090"/><rect x="9" y="7" width="2" height="2" fill="#E0B090"/><rect x="9" y="11" width="2" height="2" fill="#E0B090"/></g><g transform="translate(36,73)"><rect x="1.5" y="1.5" width="11" height="14" fill="#F2F6FA" stroke="#4A78A0"/><rect x="1.5" y="1.5" width="4" height="2" fill="#4A78A0"/><path d="M4.5 7v6h4" stroke="#6A6A6A" fill="none"/><rect x="8" y="12" width="2" height="2" fill="#E09060"/><rect x="6.5" y="0.5" width="8" height="8" fill="#fff" stroke="#3C6C94" stroke-width="1.2"/><path d="M8.5 2.5l4 4M12.5 2.5l-4 4" stroke="#3C6C94" stroke-width="1.6"/></g><g transform="translate(63,73)"><path d="M4.5 3v10c0 2 11 2 11 0V3z" fill="url(#gBlue)" stroke="#2E5E8C"/><ellipse cx="10" cy="3" rx="5.5" ry="2" fill="#E8F4FC" stroke="#2E5E8C"/><path d="M3 15c-1-4 0-7 4-8" fill="none" stroke="#2E8A2E" stroke-width="1.8"/><path d="M4.5 5h4v4z" fill="#2E8A2E"/></g><g transform="translate(86,73)"><rect x="1.5" y="2.5" width="14" height="12" fill="#fff" stroke="#3E6C94"/><rect x="1.5" y="2.5" width="14" height="1.5" fill="#3E6C94"/><rect x="10" y="4" width="5" height="10" fill="#D0CEC8"/><path d="M4 7.5h1M4 9.5h1M4 11.5h1" stroke="#3E6C94"/><path d="M6 7.5h3M6 9.5h3M6 11.5h3" stroke="#D09070"/></g><g transform="translate(114,73)"><circle cx="8" cy="8" r="7.3" fill="url(#gYel)" stroke="#D0A010"/><path d="M5.5 3.5l7 4.5-7 4.5z" fill="#3A88D0" stroke="#2A68A8" stroke-width="0.6"/></g><path d="M136 86h7l-3.5 4z" fill="#3A2E08"/><g transform="translate(161,73)"><path d="M0.5 1.5h5v5h-5zM0.5 4h5M3 1.5v5" fill="#fff" stroke="#404040"/><path d="M2.5 2.5h7l3 3v9h-10z" fill="url(#gDoc)" stroke="#4E7AA2"/><path d="M9.5 2.5v3h3" fill="#DCE8F4" stroke="#4E7AA2"/><text x="5" y="7.5" font-family="Liberation Sans" font-weight="bold" font-size="8" fill="#1E4A76">A</text><text x="7.5" y="12" font-family="Liberation Sans" font-size="7" fill="#909090">B</text><text x="10.5" y="16" font-family="Liberation Sans" font-size="7" fill="#909090">C</text></g><g transform="translate(184,73)"><path d="M0.5 1.5h5v5h-5zM0.5 4h5M3 1.5v5" fill="#E4E8EC" stroke="#B0B8C0"/><path d="M2.5 2.5h7l3 3v9h-10z" fill="#CCDAE6" stroke="#B8C8D4"/><path d="M9.5 2.5v3h3" fill="#DCE8F4" stroke="#B8C8D4"/><text x="5" y="7.5" font-family="Liberation Sans" font-weight="bold" font-size="8" fill="#98AABA">A</text><text x="7.5" y="12" font-family="Liberation Sans" font-size="7" fill="#A8A8A8">B</text><text x="10.5" y="16" font-family="Liberation Sans" font-size="7" fill="#A8A8A8">C</text></g><g transform="translate(212,73)"><path d="M3 14L8 3M7 14L12 3" stroke="#40A830" stroke-width="1.3"/></g><g transform="translate(235,73)"><path d="M3 14L8 3M7 14L12 3" stroke="#40A830" stroke-width="1.3"/><path d="M8.5 9l5 5M13.5 9l-5 5" stroke="#C02020" stroke-width="2.2"/></g><g transform="translate(263,73)"><rect x="1.5" y="0.5" width="11" height="13" fill="#F8FAFC" stroke="#6E8CA8"/><path d="M3.5 2.5h5" stroke="#40A040"/><path d="M3.5 4.5h2M6.5 4.5h4" stroke="#E04040"/><path d="M3.5 6.5h3M7.5 6.5h3" stroke="#4A7AC0"/><path d="M3.5 8.5h6" stroke="#4A7AC0"/><path d="M3.5 10.5h3" stroke="#4A7AC0"/><path d="M7 11l3 3 5-5" fill="none" stroke="#30A020" stroke-width="2.6"/></g><g transform="translate(290,73)"><text x="0" y="12" font-family="Liberation Sans" font-weight="bold" font-size="8" fill="#1E4A76">P</text><path d="M10 6.5L4 13.5" stroke="#C08A6A" stroke-width="2.4" stroke-linecap="round"/><circle cx="10" cy="6.5" r="4.8" fill="url(#gMag)" stroke="#8E6448" stroke-width="1"/><text x="6.5" y="9.5" font-family="Liberation Sans" font-weight="bold" font-size="6" fill="#2A5A8A">OL</text></g><rect x="314.5" y="73.5" width="15" height="13" rx="2" fill="#fff" stroke="#E03020"/><path d="M317.5 84V76.5h2.5c2 0 2 3.5 0 3.5h-2.5" fill="none" stroke="#E03020"/><path d="M324 76c-1.5 2-1.5 6 0 8M327 76c1.5 2 1.5 6 0 8" fill="none" stroke="#E03020"/><path d="M514 86h7l-3.5 4z" fill="#3A2E08"/><g transform="translate(538,73)"><path d="M3.5 1.5h7l3 3v10h-10z" fill="url(#gDoc)" stroke="#4E7AA2"/><path d="M10.5 1.5v3h3" fill="#DCE8F4" stroke="#4E7AA2"/><path d="M6 7.5h6M6 9.5h6M6 11.5h6" stroke="#A8C4DC"/><path d="M3.5 8v5h4" fill="none" stroke="#2E5A86" stroke-width="1.3"/><path d="M6 11l2 2-2 2z" fill="#2E5A86"/><path d="M4 0.5l3.5 3.5L4 7.5 0.5 4z" fill="#E84020"/><circle cx="4" cy="4" r="3.3" fill="#E84020"/></g><g transform="translate(561,73)"><path d="M3.5 1.5h7l3 3v10h-10z" fill="url(#gDoc)" stroke="#4E7AA2"/><path d="M10.5 1.5v3h3" fill="#DCE8F4" stroke="#4E7AA2"/><path d="M6 7.5h6M6 9.5h6M6 11.5h6" stroke="#A8C4DC"/><path d="M3.5 8v5h4" fill="none" stroke="#2E5A86" stroke-width="1.3"/><path d="M6 11l2 2-2 2z" fill="#2E5A86"/><circle cx="4" cy="4" r="3.6" fill="#2E5A76"/><text x="2" y="7" font-family="Liberation Sans" font-weight="bold" font-size="7" fill="#fff">?</text></g><g transform="translate(584,73)"><path d="M3.5 1.5h7l3 3v10h-10z" fill="#D4DCE2" stroke="#B8C4CE"/><path d="M10.5 1.5v3h3" fill="#DCE8F4" stroke="#B8C4CE"/><path d="M6 5.5h5M6 7.5h6M6 9.5h6" stroke="#C4D0DA"/><path d="M2 14l5-4" stroke="#B4A8A8" stroke-width="3" stroke-linecap="round"/></g><g transform="translate(606,73)"><path d="M3.5 1.5h7l3 3v10h-10z" fill="url(#gDoc)" stroke="#4E7AA2"/><path d="M10.5 1.5v3h3" fill="#DCE8F4" stroke="#4E7AA2"/><path d="M6 7.5h6M6 9.5h6M6 11.5h6" stroke="#A8C4DC"/><path d="M1 1l5 5M6 1l-5 5" stroke="#C82020" stroke-width="1.8"/></g><path d="M630 86h7l-3.5 4z" fill="#3A2E08"/><path d="M443 53h7l-3.5 4z" fill="#5A4A10"/><path d="M497 79h7l-3.5 4z" fill="#5A4A10"/><g transform="translate(3,2)"><rect x="0.5" y="0.5" width="13" height="13" rx="1" fill="#FFFCE0" stroke="#F2C200"/><path d="M1 8c4-1 8-1.5 12-2.5V13H1z" fill="#8CBC20"/><ellipse cx="6" cy="10" rx="2.5" ry="1.6" fill="#F4E030"/><circle cx="11" cy="11" r="1.3" fill="#F4E030"/><path d="M5 6.5L1.5 11M5.5 6.5L9.7 14" stroke="#7A7A50" stroke-width="0.8"/><rect x="4.2" y="0" width="1.8" height="6.5" fill="#484848"/><rect x="4.4" y="2.5" width="1.4" height="1.5" fill="#C8C8C8"/></g><g transform="translate(70,116)"><circle cx="8" cy="8" r="7.3" fill="url(#gGrn)" stroke="#7A9A70"/><path d="M8 4v8M4 8h8" stroke="#fff" stroke-width="2.4"/></g><g transform="translate(94,116)"><path d="M2 13l1-3.5 7.5-7.5 2.5 2.5-7.5 7.5z" fill="#58B030" stroke="#2E7A1A" stroke-width="0.8"/><path d="M2 13l1-3.5 2.5 2.5z" fill="#E8E0C0"/></g><g transform="translate(116,116)"><path d="M1.5 1.5h7l3 3v10h-10z" fill="url(#gDoc)" stroke="#7896B2"/><path d="M8.5 1.5v3h3" fill="#DCE8F4" stroke="#7896B2"/><path d="M3.5 5.5h5M3.5 7.5h6M3.5 9.5h3" stroke="#A8C0D4"/><circle cx="11.5" cy="11.5" r="4" fill="url(#gGrn)" stroke="#6A8A60"/><path d="M11.5 9v5M9 11.5h5" stroke="#fff" stroke-width="1.6"/></g><g transform="translate(140,116)"><path d="M2.5 3.5l8 8M10.5 3.5l-8 8" stroke="#E04A40" stroke-width="2.6"/></g><g transform="translate(162,116)"><path d="M7.5 2L1.5 8h3.5v5h5V8h3.5z" fill="url(#gArrUp)" stroke="#2E6A9A" stroke-width="0.9"/></g><g transform="translate(185,116)"><path d="M7.5 14L1.5 8h3.5V3h5v5h3.5z" fill="url(#gArrDn)" stroke="#2E6A9A" stroke-width="0.9"/></g><g transform="translate(208,116)"><rect x="1.5" y="1.5" width="10" height="13" fill="#F4F8FC" stroke="#6E8CA8"/><path d="M3 4.5h1M3 6.5h1M3 8.5h1M3 10.5h1M3 12.5h1" stroke="#5A8AC0"/><path d="M5 4.5h5M5 6.5h5M5 8.5h5M5 10.5h5M5 12.5h4" stroke="#9AAAB8"/><path d="M13.5 1v11" stroke="#1E2E3E" stroke-width="1"/><path d="M11 11.5h5l-2.5 3.5z" fill="#1E2E3E"/></g><path d="M58 123h6l-3 3z" fill="#2E2400"/><circle cx="13" cy="146" r="6" fill="url(#gYel)" stroke="#D6A820" stroke-width="0.8"/><g transform="translate(24,157)"><circle cx="6.5" cy="4" r="2.6" fill="#5AA0D8" stroke="#3A80B8" stroke-width="0.6"/><circle cx="4" cy="10" r="2.6" fill="#40B030" stroke="#2A9020" stroke-width="0.6"/><circle cx="11.5" cy="8.5" r="2.6" fill="#B88860" stroke="#987050" stroke-width="0.6"/></g><g transform="translate(24,176)"><rect x="1.5" y="5.5" width="5" height="5" rx="1" fill="#6A9ACA" stroke="#3A6A98"/><rect x="1.5" y="10.5" width="5" height="4" rx="1" fill="#6A9ACA" stroke="#3A6A98"/><rect x="6.5" y="10.5" width="5" height="4" rx="1" fill="#6A9ACA" stroke="#3A6A98"/><rect x="8.5" y="2.5" width="5" height="5" rx="1" fill="#8AB8E0" stroke="#3A6A98"/></g><g transform="translate(24,195)"><rect x="1.5" y="2.5" width="12" height="12" fill="#F0F8FC" stroke="#7A98B4"/><rect x="2" y="3" width="11" height="2" fill="#F0C830"/><path d="M5.5 3v11M9.5 3v11" stroke="#7A98B4"/></g><g transform="translate(24,214)"><rect x="1.5" y="2.5" width="12" height="13" fill="#F8FAFC" stroke="#7A98B4"/><path d="M6 5.5h6M6 7.5h6" stroke="#B0C4D6"/><path d="M3.5 10.5h8M3.5 12.5h8" stroke="#90B0CC"/></g><g transform="translate(24,233)"><rect x="1.5" y="1.5" width="12" height="14" rx="1.5" fill="url(#gGrnBook)" stroke="#4A8A30"/><path d="M12 2v13" stroke="#D8F0C8"/><path d="M4 4.5h5" stroke="#E8F8E0"/><rect x="3" y="7" width="2" height="1" fill="#E8F8E0"/><rect x="3" y="10" width="2" height="1" fill="#E8F8E0"/></g><g transform="translate(24,252)"><path d="M4 1.5h-1.5v5l-1 1.5 1 1.5v5H4M11 1.5h1.5v5l1 1.5-1 1.5v5H11" fill="none" stroke="#3A6088" stroke-width="1.1"/><path d="M4.5 12.5h1M7 12.5h1M9.5 12.5h1" stroke="#3A6088"/></g><g transform="translate(24,271)"><path d="M2.5 1.5h7l3 3v10h-10z" fill="url(#gDoc)" stroke="#7A98B4"/><path d="M9.5 1.5v3h3" fill="#DCE8F4" stroke="#7A98B4"/><rect x="4" y="6" width="2" height="6" fill="#E03030"/><rect x="7.5" y="8" width="2" height="4" fill="#30A030"/><path d="M3.5 12.5h8" stroke="#8AA0B4"/></g><g transform="translate(24,290)"><path d="M9 1l4.5 4.5L9 10 4.5 5.5z" fill="#F6E060" stroke="#D8B830" stroke-width="0.8"/><path d="M5 4.5H3.5v7" fill="none" stroke="#303030" stroke-dasharray="1 1"/><rect x="0.5" y="10.5" width="7" height="5" rx="1.5" fill="#A8D0F0" stroke="#4A7AA8"/><path d="M1.5 10.5h5L4 13z" fill="#202020"/></g><g transform="translate(24,309)"><rect x="1.5" y="2.5" width="13" height="12" fill="#F0F8FC" stroke="#5A80A4"/><rect x="1.5" y="2.5" width="13" height="1.5" fill="#5A80A4"/><path d="M4 5v7M6 5v7M8 5v7M10 5v7M12 5v7" stroke="#B0B8C0" stroke-dasharray="1 1"/><path d="M3 13h10" stroke="#2E5E8E" stroke-dasharray="1 1" stroke-width="1.2"/></g><g transform="translate(26,331)"><path d="M0 0h8v2H5v7H3V2H0z" fill="url(#gTT)"/><path d="M5.5 2.5H12v2H9v8H7v-8H5.5z" fill="url(#gTT)"/></g><g transform="translate(45,350)"><path d="M0 0h8v2H5v7H3V2H0z" fill="url(#gTT)"/><path d="M5.5 2.5H12v2H9v8H7v-8H5.5z" fill="url(#gTT)"/></g><g transform="translate(24,366)"><path d="M1 10l7-3.5 7 3.5-7 3.5z" fill="#4A9A30"/><path d="M1 6.5L8 3l7 3.5L8 10z" fill="#88C860" stroke="#5AA040" stroke-width="0.6"/></g><g transform="translate(24,385)"><rect x="1.5" y="1.5" width="12" height="13" fill="#F4F8FC" stroke="#7A98B4"/><rect x="2" y="2" width="11" height="3" fill="#8CC860"/><rect x="5.5" y="8" width="4" height="3" fill="#8CC860"/><path d="M5.5 2v12M9.5 2v12M2 5.5h11M2 8.5h11M2 11.5h11" stroke="#A8BCCC"/></g><g transform="translate(24,404)"><rect x="1.5" y="1.5" width="12" height="14" fill="#F4F8FC" stroke="#7A98B4"/><ellipse cx="7.5" cy="11" rx="3.5" ry="1.8" fill="#E8B820" stroke="#B88A10" stroke-width="0.6"/><ellipse cx="7.5" cy="8.5" rx="3.5" ry="1.8" fill="#F2CC40" stroke="#B88A10" stroke-width="0.6"/><ellipse cx="7.5" cy="6" rx="3.5" ry="1.8" fill="#F8DC60" stroke="#B88A10" stroke-width="0.6"/></g><g transform="translate(24,423)"><rect x="1.5" y="1.5" width="12" height="14" fill="#F4F8FC" stroke="#7A98B4"/><g transform="translate(3,4) scale(0.75)"><g transform="translate(0,0)"><path d="M0 0h8v2H5v7H3V2H0z" fill="#3A80B8"/><path d="M5.5 2.5H12v2H9v8H7v-8H5.5z" fill="#3A80B8"/></g></g></g><g transform="translate(24,442)"><rect x="1.5" y="1.5" width="12" height="14" fill="#F4F8FC" stroke="#7A98B4"/><path d="M3 8l4.5-2 4.5 2-4.5 2z" fill="#3A9A28"/><rect x="2" y="10" width="11" height="5" fill="#D8E8F4"/></g><g transform="translate(24,461)"><rect x="5.5" y="0.5" width="5" height="2.5" fill="#4AA0E0" stroke="#2A70B0" stroke-width="0.6"/><path d="M8 3v2" stroke="#606060"/><rect x="4.5" y="5" width="7" height="4" rx="1" fill="#F6D0A0" stroke="#C09060" stroke-width="0.6"/><path d="M3.5 9v3M11.5 9v3" stroke="#606060"/><path d="M0 11h7l-3.5 4z" fill="#2A5A86"/><path d="M11.5 9l4 3.5-4 3.5-4-3.5z" fill="#E04030"/></g><g transform="translate(24,480)"><path d="M1.5 1.5h8l3 3v11h-11z" fill="url(#gDoc)" stroke="#7A98B4"/><path d="M9.5 1.5v3h3" fill="#DCE8F4" stroke="#7A98B4"/><path d="M3.5 6.5h1M3.5 9.5h1M3.5 12.5h1" stroke="#3A6AB0"/><path d="M6 6.5h5M6 12.5h5" stroke="#D04040"/><circle cx="7" cy="9.5" r="1.3" fill="none" stroke="#606060" stroke-width="0.7"/><path d="M9 9.5h2" stroke="#909090"/></g><g transform="translate(263,102)"><path d="M0 0h8v2H5v7H3V2H0z" fill="url(#gTT)"/><path d="M5.5 2.5H12v2H9v8H7v-8H5.5z" fill="url(#gTT)"/></g><g transform="translate(282,120)"><path d="M1.5 1.5h8l3 3v10h-11z" fill="url(#gDoc)" stroke="#6E92B4"/><path d="M9.5 1.5v3h3" fill="#DCE8F4" stroke="#6E92B4"/><path d="M3.5 4.5h4M3.5 6.5h4" stroke="#A8BCCC"/><path d="M3.5 9.5h8M3.5 11.5h8M3.5 13.5h8" stroke="#98B8D4"/></g><g transform="translate(5,956)"><path d="M0 0h8v2H5v7H3V2H0z" fill="url(#gTT)"/><path d="M5.5 2.5H12v2H9v8H7v-8H5.5z" fill="url(#gTT)"/></g><g transform="translate(177,953)"><path d="M1.5 1.5h8l3 3v11h-11z" fill="url(#gDoc)" stroke="#6E92B4"/><path d="M9.5 1.5v3h3" fill="#DCE8F4" stroke="#6E92B4"/><path d="M3.5 4.5h4M3.5 6.5h4" stroke="#A8BCCC"/><path d="M3.5 9.5h8M3.5 11.5h8M3.5 13.5h8" stroke="#98B8D4"/></g></svg></body></html>
